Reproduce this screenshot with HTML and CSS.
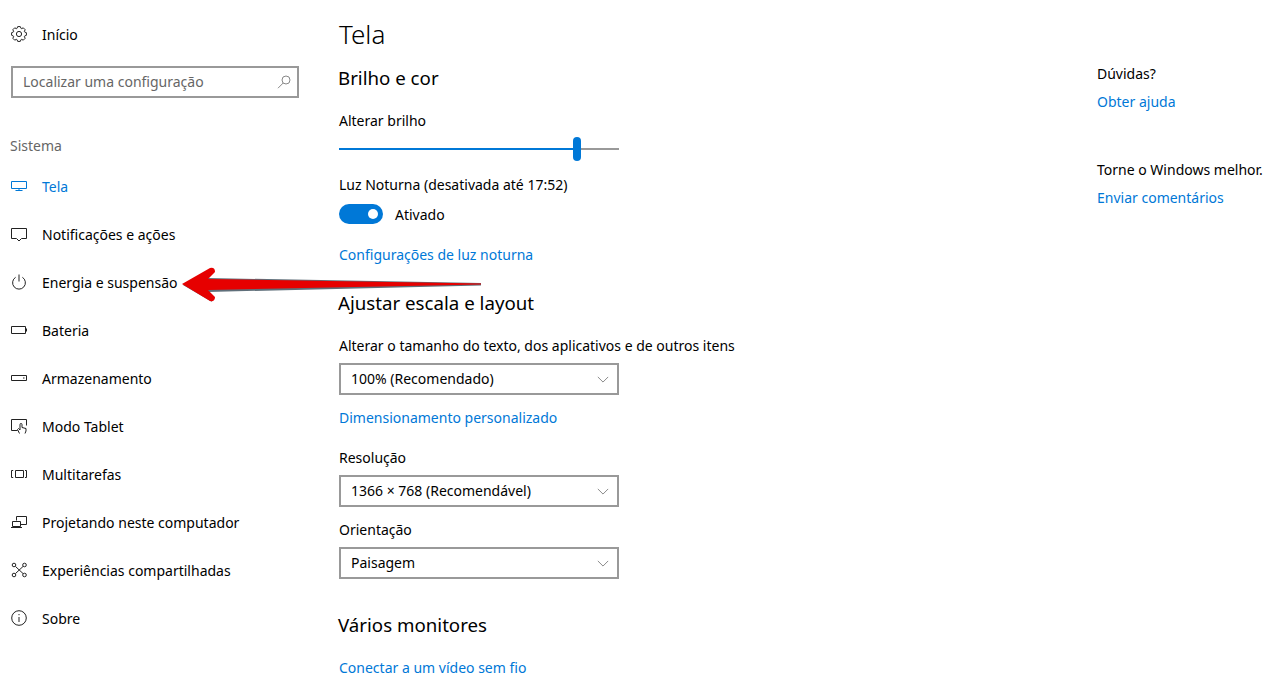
FILE: index.html
```html
<!DOCTYPE html>
<html lang="pt-BR">
<head>
  <meta charset="UTF-8" />
  <title>Configurações - Tela</title>
  <link rel="stylesheet" href="styles.css">
</head>
<body>
  <div class="sidebar">
    <div class="home">
      <svg class="icon" viewBox="-8 -8 16 16"><polygon points="-2,5.6 -1.3,7.4 1.3,7.4 2,5.6 2.55,5.37 4.31,6.15 6.15,4.31 5.37,2.55 5.6,2 7.4,1.3 7.4,-1.3 5.6,-2 5.37,-2.55 6.15,-4.31 4.31,-6.15 2.55,-5.37 2,-5.6 1.3,-7.4 -1.3,-7.4 -2,-5.6 -2.55,-5.37 -4.31,-6.15 -6.15,-4.31 -5.37,-2.55 -5.6,-2 -7.4,-1.3 -7.4,1.3 -5.6,2 -5.37,2.55 -6.15,4.31 -4.31,6.15 -2.55,5.37"/><circle r="2.6"/></svg>
      <span>Início</span>
    </div>
    <div class="search">
      <span>Localizar uma configuração</span>
      <svg class="search-icon" viewBox="0 0 14 14"><circle cx="9" cy="5" r="4"/><path d="M6.2 8 L1 13.2"/></svg>
    </div>
    <div class="group-title line">Sistema</div>
    <div class="nav-item active">
      <svg class="icon" viewBox="0 0 16 16"><path d="M0.5 3.5 H15.5 V10.5 H0.5 Z M8 10.5 V12.5 M4.5 12.5 H11.5"/></svg>
      <span>Tela</span>
    </div>
    <div class="nav-item">
      <svg class="icon" viewBox="0 0 16 16"><path d="M0.5 2.5 H15.5 V12.5 H10.5 L8 15 L5.5 12.5 H0.5 Z"/></svg>
      <span>Notificações e ações</span>
    </div>
    <div class="nav-item">
      <svg class="icon" viewBox="0 0 16 16"><path d="M4.6 3.3 A6.4 6.4 0 1 0 11.4 3.3 M8 0.5 V7.5"/></svg>
      <span>Energia e suspensão</span>
    </div>
    <div class="nav-item">
      <svg class="icon" viewBox="0 0 16 16"><path d="M0.5 4.5 H14.5 V11.5 H0.5 Z M15.5 6.5 V9.5"/></svg>
      <span>Bateria</span>
    </div>
    <div class="nav-item">
      <svg class="icon" viewBox="0 0 16 16"><path d="M0.5 5.5 H15.5 V10.5 H0.5 Z M12 8 H13.5"/></svg>
      <span>Armazenamento</span>
    </div>
    <div class="nav-item">
      <svg class="icon" viewBox="0 0 16 16"><path d="M6.5 12.5 H0.5 V1.5 H15.5 V7.5 M8.5 15.5 L6.5 11.5 L7.5 10.5 L9 12 V6.5 A1 1 0 0 1 11 6.5 V9.5 L15 10.5 V13 L14 15.5"/></svg>
      <span>Modo Tablet</span>
    </div>
    <div class="nav-item">
      <svg class="icon" viewBox="0 0 16 16"><path d="M4.5 4.5 H12.5 V11.5 H4.5 Z M2.2 4.5 H0.5 V11.5 H2.2 M14 4.5 H15.5 V11.5 H14"/></svg>
      <span>Multitarefas</span>
    </div>
    <div class="nav-item">
      <svg class="icon" viewBox="0 0 16 16"><path d="M5.5 6.5 V2.5 H15.5 V10.5 H9.5 M1.5 7.5 H9.5 V12.5 H1.5 Z M0 13.5 H11"/></svg>
      <span>Projetando neste computador</span>
    </div>
    <div class="nav-item">
      <svg class="icon" viewBox="0 0 16 16"><circle cx="3" cy="3" r="1.8"/><circle cx="13.5" cy="3" r="1.8"/><circle cx="3" cy="13" r="1.8"/><circle cx="13.5" cy="13" r="1.8"/><path d="M4.5 4.5 L12 11.5 M12 4.5 L4.5 11.5"/></svg>
      <span>Experiências compartilhadas</span>
    </div>
    <div class="nav-item">
      <svg class="icon" viewBox="0 0 16 16"><circle cx="8" cy="8" r="7.3"/><path d="M8 7 V12 M8 4 V5.2"/></svg>
      <span>Sobre</span>
    </div>
  </div>

  <div class="main">
    <h1>Tela</h1>
    <h2>Brilho e cor</h2>
    <div class="line gap-18">Alterar brilho</div>
    <div class="slider">
      <div class="slider-fill"></div>
      <div class="slider-thumb"></div>
      <div class="slider-rest"></div>
    </div>
    <div class="line gap-13">Luz Noturna (desativada até 17:52)</div>
    <div class="toggle-row">
      <div class="toggle"><div class="knob"></div></div>
      <span>Ativado</span>
    </div>
    <a class="line link gap-20">Configurações de luz noturna</a>
    <h2 class="gap-25">Ajustar escala e layout</h2>
    <div class="line gap-18">Alterar o tamanho do texto, dos aplicativos e de outros itens</div>
    <div class="select">
      <span>100% (Recomendado)</span>
      <svg class="chevron" viewBox="0 0 14 8"><path d="M1 1 L7 7 L13 1"/></svg>
    </div>
    <a class="line link gap-12">Dimensionamento personalizado</a>
    <div class="line gap-20">Resolução</div>
    <div class="select">
      <span>1366 × 768 (Recomendável)</span>
      <svg class="chevron" viewBox="0 0 14 8"><path d="M1 1 L7 7 L13 1"/></svg>
    </div>
    <div class="line gap-12">Orientação</div>
    <div class="select">
      <span>Paisagem</span>
      <svg class="chevron" viewBox="0 0 14 8"><path d="M1 1 L7 7 L13 1"/></svg>
    </div>
    <h2 class="gap-32">Vários monitores</h2>
    <a class="line link gap-18">Conectar a um vídeo sem fio</a>
  </div>

  <div class="aside">
    <div class="line">Dúvidas?</div>
    <a class="line link gap-8">Obter ajuda</a>
    <div class="line gap-48">Torne o Windows melhor.</div>
    <a class="line link gap-8">Enviar comentários</a>
  </div>

  <svg class="arrow" viewBox="0 0 310 40">
    <path class="arrow-shadow" d="M4 20 L33 3 L29 13 L302 18 L302 20.5 L29 27 L33 37 Z"/>
    <path class="arrow-red" d="M3 19 L31 3 Q36 2 36 7 L29 14 L302 18.5 L302 19.5 L29 25 L36 32 Q36 37 31 36 Z"/>
  </svg>
</body>
</html>
```

FILE: styles.css
```css
html, body {
  margin: 0;
  height: 100%;
  overflow: hidden;
}

body {
  display: flex;
  position: relative;
  background: #fff;
  color: #000;
  font-family: 'Noto Sans', 'Open Sans', sans-serif;
  font-size: 14px;
  line-height: 20px;
}

/* left column */
.sidebar {
  width: 328px;
  padding-left: 11px;
  flex-shrink: 0;
}

.icon {
  width: 16px;
  height: 16px;
  flex-shrink: 0;
  fill: none;
  stroke: #222;
  stroke-width: 1;
}

.home {
  display: flex;
  align-items: center;
  gap: 15px;
  height: 40px;
  margin-top: 14px;
}

.search {
  display: flex;
  align-items: center;
  justify-content: space-between;
  box-sizing: border-box;
  width: 288px;
  height: 32px;
  margin-top: 12px;
  padding: 0 6px 0 10px;
  border: 2px solid #999;
  color: #666;
}

.search-icon {
  width: 14px;
  height: 14px;
  fill: none;
  stroke: #888;
  stroke-width: 1;
}

.group-title {
  margin-top: 37px;
  margin-left: -1px;
  color: #666;
}

.nav-item {
  display: flex;
  align-items: center;
  gap: 15px;
  height: 48px;
}

.group-title + .nav-item {
  margin-top: 7px;
}

.nav-item.active {
  color: #0078d7;
}

.nav-item.active .icon {
  stroke: #0078d7;
}

/* main column */
.main {
  width: 758px;
  flex-shrink: 0;
  padding-top: 14px;
}

h1 {
  margin: 0;
  font-size: 26px;
  font-weight: 300;
  line-height: 40px;
}

h2 {
  margin: 10px 0 0 -1px;
  font-size: 18.7px;
  font-weight: 400;
  line-height: 28px;
}

/* text sits a pixel lower in its 20px row */
.line {
  display: block;
  padding-top: 1px;
  margin-bottom: -1px;
}

.home span,
.nav-item span,
.toggle-row span {
  padding-top: 2px;
}

.link {
  color: #0078d7;
}

.gap-8 { margin-top: 8px; }
.gap-12 { margin-top: 12px; }
.gap-13 { margin-top: 13px; }
.gap-18 { margin-top: 18px; }
.gap-20 { margin-top: 20px; }
.gap-25 { margin-top: 25px; }
.gap-32 { margin-top: 32px; }
.gap-48 { margin-top: 48px; }

.slider {
  display: flex;
  align-items: center;
  width: 280px;
  height: 24px;
  margin-top: 7px;
}

.slider-fill {
  width: 234px;
  height: 2px;
  background: #0078d7;
}

.slider-thumb {
  width: 8px;
  height: 24px;
  border-radius: 4px;
  background: #0078d7;
}

.slider-rest {
  flex: 1;
  height: 2px;
  background: #999;
}

.toggle-row {
  display: flex;
  align-items: center;
  gap: 12px;
  height: 20px;
  margin-top: 10px;
}

.toggle {
  display: flex;
  align-items: center;
  justify-content: flex-end;
  box-sizing: border-box;
  width: 44px;
  height: 20px;
  padding-right: 5px;
  border-radius: 10px;
  background: #0078d7;
}

.knob {
  width: 10px;
  height: 10px;
  border-radius: 50%;
  background: #fff;
}

.select {
  display: flex;
  align-items: center;
  justify-content: space-between;
  box-sizing: border-box;
  width: 280px;
  height: 32px;
  margin-top: 8px;
  padding: 0 8px 0 10px;
  border: 2px solid #999;
}

.chevron {
  width: 12px;
  height: 7px;
  fill: none;
  stroke: #777;
  stroke-width: 1;
}

/* right column */
.aside {
  padding-top: 63px;
}

.aside .line {
  white-space: nowrap;
}

/* red arrow drawn over the screenshot */
.arrow {
  position: absolute;
  left: 179px;
  top: 265px;
  width: 310px;
  height: 40px;
}

.arrow-shadow {
  fill: #5f6f7a;
}

.arrow-red {
  fill: #e60000;
}
```
